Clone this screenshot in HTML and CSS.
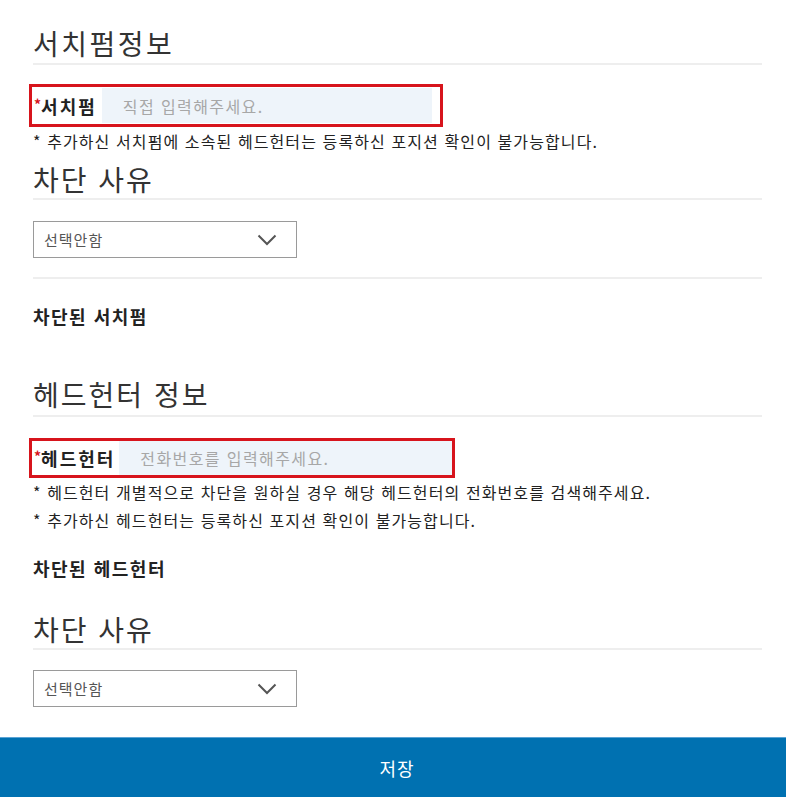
FILE: index.html
```html
<!DOCTYPE html>
<html lang="ko">
<head>
  <meta charset="UTF-8" />
  <meta name="viewport" content="width=device-width, initial-scale=1.0" />
  <title>차단 설정</title>
  <link rel="stylesheet" href="styles.css">
</head>
<body>
  <div class="page">
    <h2 class="section-title first">서치펌정보</h2>

    <div class="field field-firm">
      <label class="field-label"><span class="req">*</span>서치펌</label>
      <input class="field-input" type="text" placeholder="직접 입력해주세요." />
    </div>
    <p class="note">* 추가하신 서치펌에 소속된 헤드헌터는 등록하신 포지션 확인이 불가능합니다.</p>

    <h2 class="section-title reason">차단 사유</h2>
    <div class="select">
      <span>선택안함</span>
      <svg class="chevron" width="20" height="12" viewBox="0 0 20 12">
        <path d="M1.5 1.5 L10 10 L18.5 1.5" fill="none" stroke="#555" stroke-width="2" />
      </svg>
    </div>
    <div class="divider"></div>

    <h3 class="sub-title firm-list">차단된 서치펌</h3>

    <h2 class="section-title hunter">헤드헌터 정보</h2>

    <div class="field field-hunter">
      <label class="field-label"><span class="req">*</span>헤드헌터</label>
      <input class="field-input" type="text" placeholder="전화번호를 입력해주세요." />
    </div>
    <p class="note">* 헤드헌터 개별적으로 차단을 원하실 경우 해당 헤드헌터의 전화번호를 검색해주세요.</p>
    <p class="note">* 추가하신 헤드헌터는 등록하신 포지션 확인이 불가능합니다.</p>

    <h3 class="sub-title hunter-list">차단된 헤드헌터</h3>

    <h2 class="section-title reason-2">차단 사유</h2>
    <div class="select">
      <span>선택안함</span>
      <svg class="chevron" width="20" height="12" viewBox="0 0 20 12">
        <path d="M1.5 1.5 L10 10 L18.5 1.5" fill="none" stroke="#555" stroke-width="2" />
      </svg>
    </div>
  </div>

  <button class="btn-save">저장</button>
</body>
</html>
```

FILE: styles.css
```css
body {
  margin: 0;
  font-family: "Noto Sans CJK KR", "Noto Sans", sans-serif;
  color: #222;
  background: #fff;
}
.page {
  padding: 0 24px 0 33px;
}
.section-title {
  margin: 0;
  font-size: 28px;
  font-weight: 400;
  line-height: 36px;
  letter-spacing: 2px;
  color: #333;
  padding-bottom: 1px;
  border-bottom: 2px solid #eee;
}
.section-title.first { margin-top: 25px; padding-bottom: 2px; letter-spacing: 2.5px; }
.section-title.reason { margin-top: 6px; }
.section-title.hunter { margin-top: 48px; padding-bottom: 3px; }
.section-title.reason-2 { margin-top: 31px; }

.field {
  display: inline-flex;
  align-items: center;
  margin-left: -4px;
  border: 3px solid #d7141c;
  padding-left: 2px;
}
.field-firm { margin-top: 19px; height: 37px; padding-right: 8px; }
.field-hunter { margin-top: 21px; height: 34px; }
.field-label {
  font-size: 18px;
  font-weight: 700;
  letter-spacing: 2px;
  color: #222;
  white-space: nowrap;
}
.req {
  color: #d7141c;
  font-size: 14px;
  letter-spacing: 0;
  vertical-align: 4px;
}
.field-input {
  width: 330px;
  height: 35px;
  box-sizing: border-box;
  margin-left: 5px;
  border: none;
  background: #eef4fa;
  padding: 0 21px;
  font-family: inherit;
  font-size: 16px;
  letter-spacing: 1.4px;
  color: #333;
  outline: none;
}
.field-hunter .field-input { height: 34px; width: 333px; margin-left: 4px; }
.field-input::placeholder { color: #a7a7a7; }

.note {
  margin: 0;
  font-size: 16px;
  line-height: 28px;
  letter-spacing: 1.1px;
  color: #222;
}

.select {
  display: flex;
  align-items: center;
  justify-content: space-between;
  box-sizing: border-box;
  width: 264px;
  height: 37px;
  margin-top: 21px;
  padding: 0 19px 0 10px;
  border: 1px solid #9a9a9a;
  font-size: 15px;
  letter-spacing: 1px;
  color: #555;
}
.reason-2 + .select { margin-top: 20px; }

.divider {
  margin-top: 19px;
  height: 2px;
  background: #eee;
}

.sub-title {
  margin: 0;
  font-size: 18px;
  font-weight: 700;
  line-height: 24px;
  letter-spacing: 1.5px;
  color: #222;
}
.sub-title.firm-list { margin-top: 25px; }
.sub-title.hunter-list { margin-top: 22px; }

.btn-save {
  display: block;
  width: 100%;
  height: 61px;
  margin-top: 30px;
  padding-left: 14px;
  border: none;
  border-top: 1px solid #5aa3d4;
  background: #0071b1;
  color: #fff;
  font-family: inherit;
  font-size: 18px;
  letter-spacing: 1px;
  cursor: pointer;
}
```
